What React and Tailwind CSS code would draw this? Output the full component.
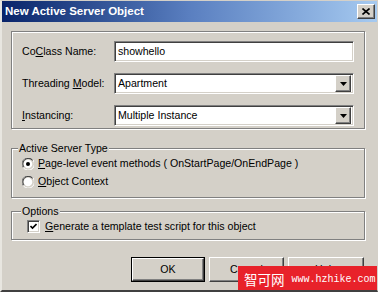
import React from "react";

const sunken =
  "border border-t-[#808080] border-l-[#808080] border-b-white border-r-white shadow-[inset_1px_1px_0_#404040,inset_-1px_-1px_0_#d4d0c8]";
const raised =
  "border border-t-white border-l-white border-b-[#404040] border-r-[#404040] shadow-[inset_-1px_-1px_0_#808080,inset_1px_1px_0_#d4d0c8]";
const etched =
  "border border-[#808080] shadow-[inset_1px_1px_0_white,1px_1px_0_white]";

function U({ children }) {
  return <span className="underline underline-offset-[1px]">{children}</span>;
}

function Select({ value }) {
  return (
    <div className={`w-[240px] h-[21px] bg-white flex items-center ${sunken} p-[2px]`}>
      <span className="flex-1 pl-[1px]">{value}</span>
      <div className={`w-[16px] h-[17px] bg-[#d4d0c8] flex items-center justify-center ${raised}`}>
        <svg width="7" height="4" viewBox="0 0 7 4">
          <path d="M0 0H7L3.5 4Z" fill="black" />
        </svg>
      </div>
    </div>
  );
}

function Radio({ checked }) {
  return (
    <svg width="12" height="12" viewBox="0 0 12 12">
      <path d="M11 2.5A5.5 5.5 0 0 0 1 9.5" stroke="#808080" strokeWidth="1" fill="none" />
      <path d="M10.5 2.5A5 5 0 0 0 2 9" stroke="#404040" strokeWidth="1" fill="none" />
      <circle cx="6" cy="6" r="4.3" fill="white" />
      <path d="M1.5 10A5.5 5.5 0 0 0 11 2" stroke="white" strokeWidth="1" fill="none" />
      {checked && <circle cx="6" cy="6" r="2" fill="black" />}
    </svg>
  );
}

export default function App() {
  return (
    <div
      className="w-[378px] h-[292px] bg-[#d4d0c8] relative overflow-hidden border-l-2 border-t border-b-2 border-r border-l-[#e8e6e0] border-t-[#d4d0c8] border-b-[#404040] border-r-[#d4d0c8] text-black"
      style={{ fontFamily: '"Liberation Sans", Arial, sans-serif', fontSize: "10.6px" }}
    >
      {/* Title bar */}
      <div className="h-[21px] bg-gradient-to-r from-[#0a246a] via-[#5a7fc0] to-[#a6caf0] flex items-center justify-between pl-[3px] pr-[2px]">
        <span className="text-white font-bold text-[11.5px] leading-none">New Active Server Object</span>
        <div className={`w-[18px] h-[15px] bg-[#d4d0c8] flex items-center justify-center ${raised}`}>
          <svg width="8" height="7" viewBox="0 0 8 7">
            <path d="M0.5 0.5L7.5 6.5M7.5 0.5L0.5 6.5" stroke="black" strokeWidth="1.6" />
          </svg>
        </div>
      </div>

      <div className="pl-[9px] pr-[12px] pt-[9px] flex flex-col">
        {/* Group 1 */}
        <div className={`h-[98px] ${etched} flex flex-col pt-[9px] pl-[10px] pr-[9px] gap-[11px]`}>
          <div className="flex items-center h-[21px]">
            <span className="w-[92px]">Co<U>C</U>lass Name:</span>
            <div className={`w-[240px] h-[21px] bg-white flex items-center ${sunken} pl-[3px]`}>showhello</div>
          </div>
          <div className="flex items-center h-[21px]">
            <span className="w-[92px]">Threading <U>M</U>odel:</span>
            <Select value="Apartment" />
          </div>
          <div className="flex items-center h-[21px]">
            <span className="w-[92px]"><U>I</U>nstancing:</span>
            <Select value="Multiple Instance" />
          </div>
        </div>

        {/* Group 2 */}
        <div className={`relative mt-[19px] h-[50px] ${etched} flex flex-col pt-[9px] pl-[10px] gap-[6px]`}>
          <span className="absolute left-[6px] top-[-8px] bg-[#d4d0c8] px-[1px] leading-[14px]">Active Server Type</span>
          <div className="flex items-center gap-[4px] h-[12px]">
            <Radio checked />
            <span><U>P</U>age-level event methods ( OnStartPage/OnEndPage )</span>
          </div>
          <div className="flex items-center gap-[4px] h-[12px]">
            <Radio />
            <span><U>O</U>bject Context</span>
          </div>
        </div>

        {/* Group 3 */}
        <div className={`relative mt-[13px] h-[29px] ${etched} flex items-center pl-[15px]`}>
          <span className="absolute left-[9px] top-[-8px] bg-[#d4d0c8] px-[1px] leading-[14px]">Options</span>
          <div className="flex items-center gap-[5px] mt-[3px]">
            <div className={`w-[13px] h-[13px] bg-white ${sunken} flex items-center justify-center`}>
              <svg width="7" height="7" viewBox="0 0 7 7">
                <path d="M0.5 3L2.5 5L6.5 1" stroke="black" strokeWidth="1.6" fill="none" />
              </svg>
            </div>
            <span><U>G</U>enerate a template test script for this object</span>
          </div>
        </div>

        {/* Buttons */}
        <div className="flex justify-end gap-[4px] mt-[17px] pr-[1px]">
          <div className="w-[74px] h-[25px] border border-black">
            <div className={`w-full h-full flex items-center justify-center ${raised}`}>OK</div>
          </div>
          <div className={`w-[75px] h-[25px] flex items-center justify-center ${raised}`}>Cancel</div>
          <div className={`w-[76px] h-[25px] flex items-center justify-center ${raised}`}>Help</div>
        </div>
      </div>

      {/* Watermark */}
      <div className="absolute left-[236px] top-[265px] w-[142px] h-[27px] bg-[#e8222a] flex items-center pl-[6px] gap-[7px] text-white whitespace-nowrap">
        <span className="text-[13.5px] leading-none" style={{ fontFamily: '"Noto Sans CJK SC", sans-serif' }}>智可网</span>
        <span className="text-[10px] leading-none" style={{ fontFamily: '"Liberation Mono", monospace' }}>www.hzhike.com</span>
      </div>
    </div>
  );
}
